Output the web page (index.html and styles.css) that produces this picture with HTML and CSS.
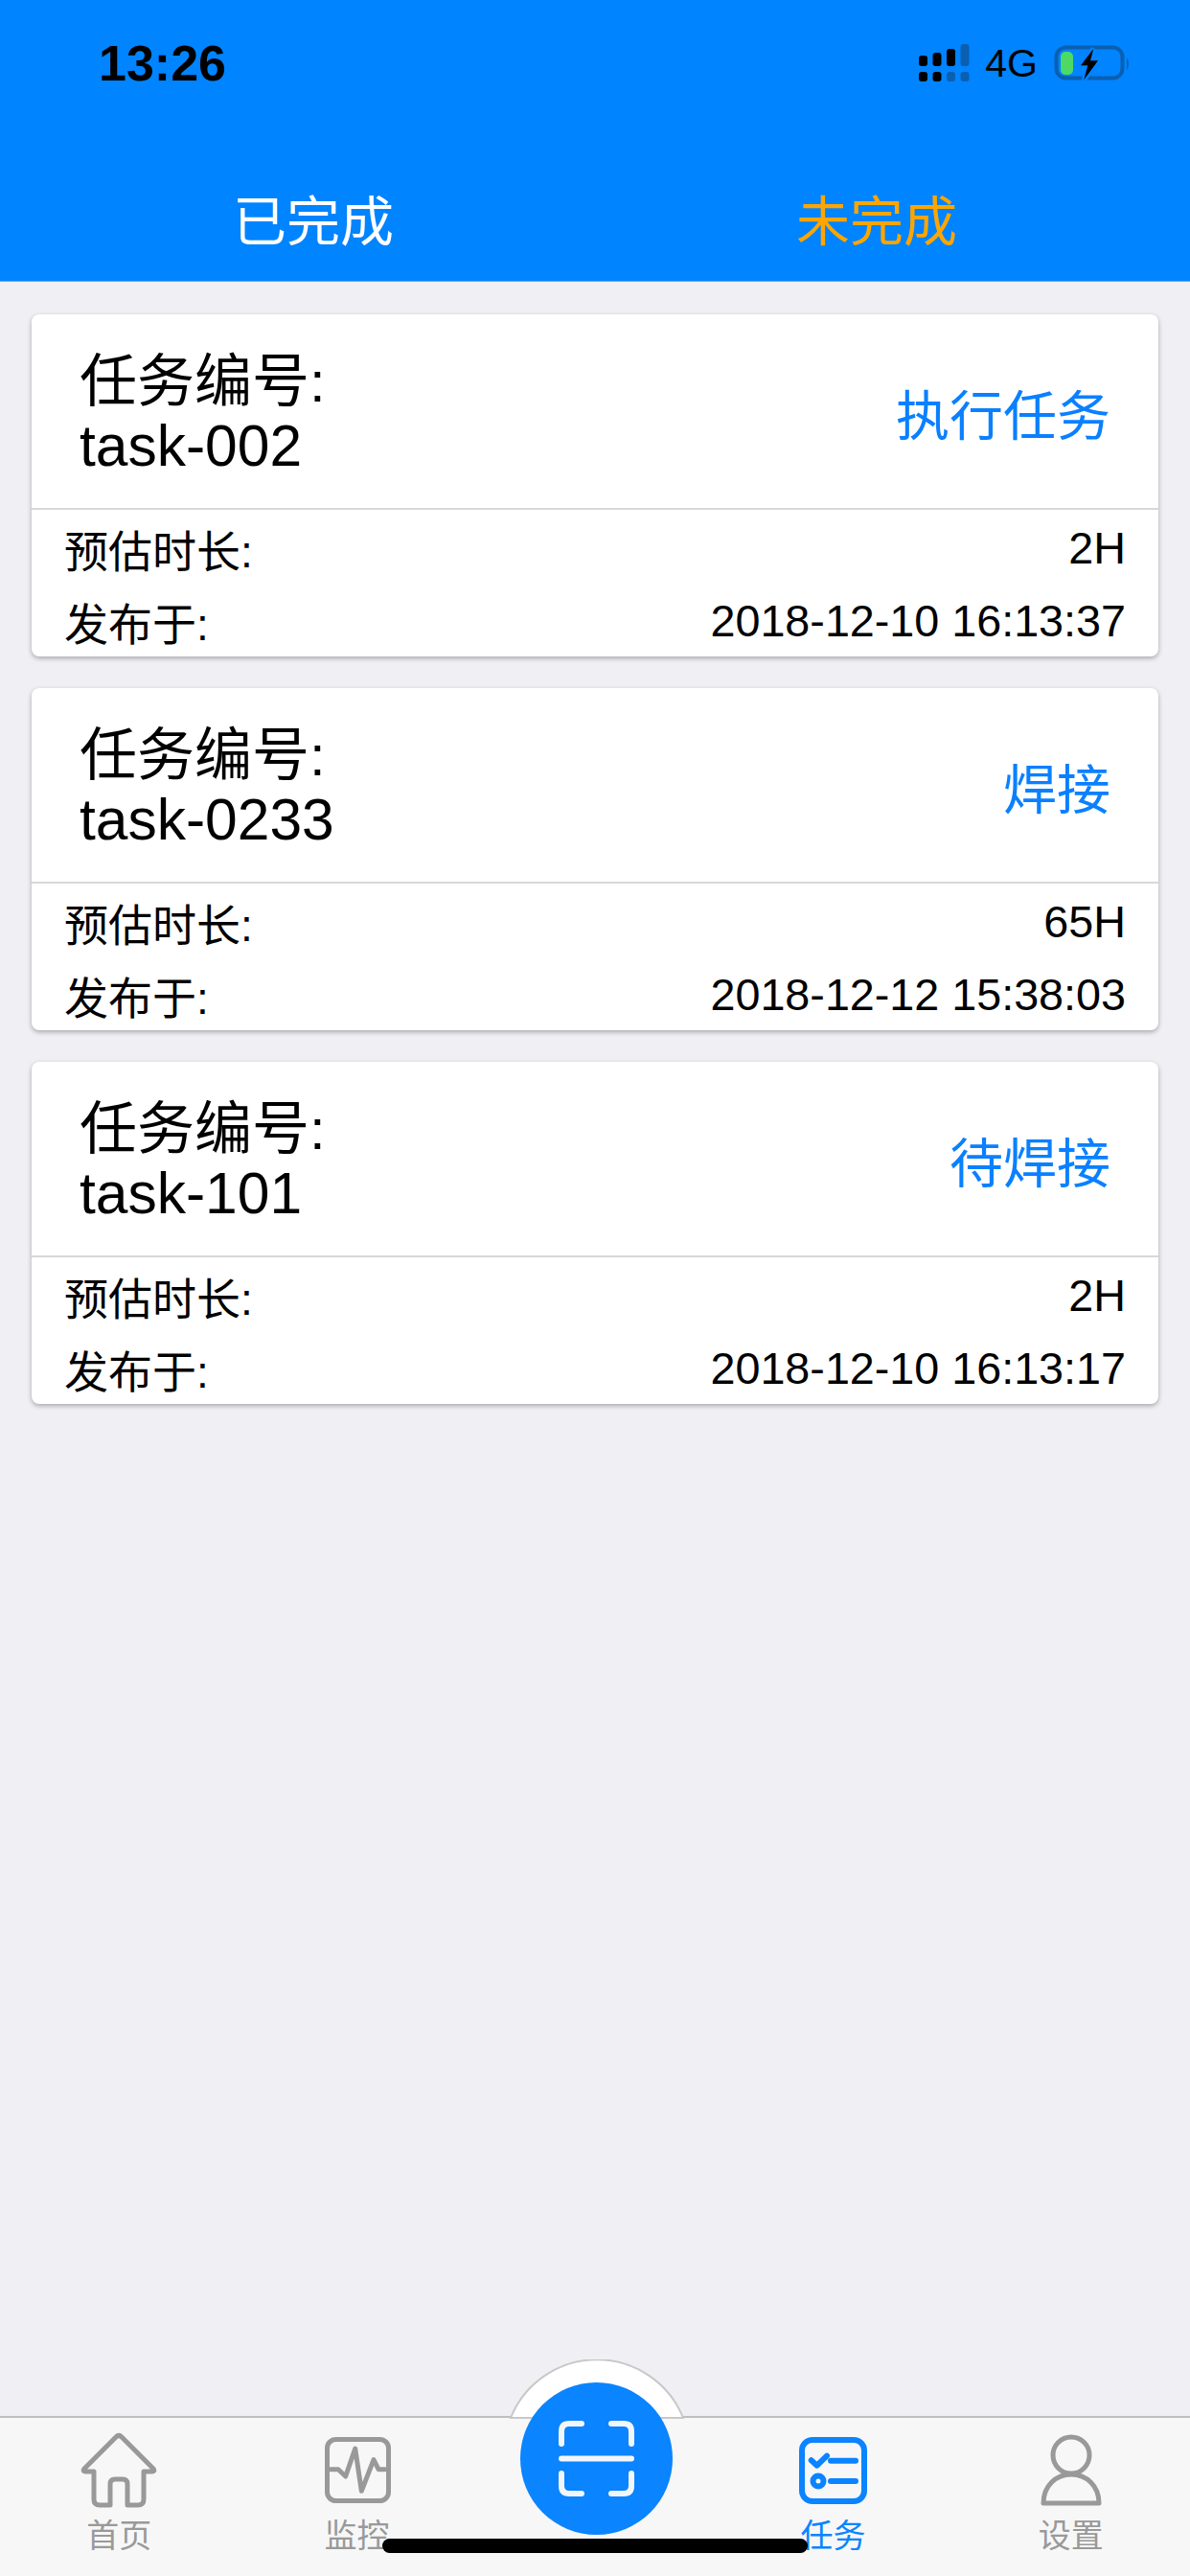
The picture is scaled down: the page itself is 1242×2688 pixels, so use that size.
FILE: index.html
```html
<!DOCTYPE html>
<html lang="zh">

<head>
    <meta charset="UTF-8">
    <meta name="viewport" content="width=device-width, initial-scale=1.0">
    <title>任务</title>
    <link rel="stylesheet" href="styles.css">
</head>

<body>
    <header class="top">
        <div class="status">
            <span class="time">13:26</span>
            <div class="status-right">
                <svg class="signal" width="56" height="42" viewBox="0 0 56 42">
                    <rect x="2" y="13" width="9" height="11" rx="3" />
                    <rect x="16.500" y="10" width="9" height="14" rx="3" />
                    <rect x="31" y="6" width="9" height="18" rx="3" />
                    <rect class="dim" x="45.500" y="1" width="9" height="23" rx="3" />
                    <rect x="2" y="30" width="9" height="10" rx="3" />
                    <rect x="16.500" y="30" width="9" height="10" rx="3" />
                    <rect class="dim" x="31" y="30" width="9" height="10" rx="3" />
                    <rect class="dim" x="45.500" y="30" width="9" height="10" rx="3" />
                </svg>
                <span class="net">4G</span>
                <svg class="battery" width="86" height="44" viewBox="0 0 86 44">
                    <rect class="battery-body" x="4.500" y="5.500" width="69" height="32" rx="10" />
                    <path class="battery-nub" d="M78 16 Q82 22 78 29 Z" />
                    <rect class="battery-level" x="9" y="10" width="13" height="24" rx="5" />
                    <path class="bolt-gap" d="M43.300 6.700 L30 24.300 H37.300 L33.300 39.300 L48 19.300 H40 Z" />
                    <path d="M43.300 6.700 L30 24.300 H37.300 L33.300 39.300 L48 19.300 H40 Z" />
                </svg>
            </div>
        </div>
        <nav class="tabs">
            <a class="tab">已完成</a>
            <a class="tab tab-on">未完成</a>
        </nav>
    </header>

    <main class="list">
        <section class="card">
            <div class="card-top">
                <div class="task-name">
                    <div>任务编号:</div>
                    <div class="task-id">task-002</div>
                </div>
                <a class="task-action">执行任务</a>
            </div>
            <div class="card-rows">
                <div class="row"><span>预估时长:</span><span class="row-value">2H</span></div>
                <div class="row"><span>发布于:</span><span class="row-value">2018-12-10 16:13:37</span></div>
            </div>
        </section>
        <section class="card">
            <div class="card-top">
                <div class="task-name">
                    <div>任务编号:</div>
                    <div class="task-id">task-0233</div>
                </div>
                <a class="task-action">焊接</a>
            </div>
            <div class="card-rows">
                <div class="row"><span>预估时长:</span><span class="row-value">65H</span></div>
                <div class="row"><span>发布于:</span><span class="row-value">2018-12-12 15:38:03</span></div>
            </div>
        </section>
        <section class="card">
            <div class="card-top">
                <div class="task-name">
                    <div>任务编号:</div>
                    <div class="task-id">task-101</div>
                </div>
                <a class="task-action">待焊接</a>
            </div>
            <div class="card-rows">
                <div class="row"><span>预估时长:</span><span class="row-value">2H</span></div>
                <div class="row"><span>发布于:</span><span class="row-value">2018-12-10 16:13:17</span></div>
            </div>
        </section>
    </main>

    <footer class="tabbar">
        <svg class="bump" width="184" height="62" viewBox="0 0 184 62">
            <path d="M2 61 A97 97 0 0 1 182 61 Z" />
        </svg>

        <a class="item">
            <svg class="icon" width="80" height="80" viewBox="0 0 80 80">
                <path d="M37 5 L4 38 Q2 41 5 41 H14 V70 Q14 76 20 76 H31 V54 Q31 49 36 49 H44 Q49 49 49 54 V76 H60 Q66 76 66 70 V41 H75 Q78 41 76 38 L43 5 Q40 2 37 5 Z" />
            </svg>
            <span>首页</span>
        </a>
        <a class="item">
            <svg class="icon" width="80" height="80" viewBox="0 0 80 80">
                <rect x="8.500" y="7.500" width="64" height="64" rx="9" />
                <path d="M12 38.700 H20 L27.700 46 L37.700 17 L44.300 61.300 L57 28.700 L62 38.700 H68.700" />
            </svg>
            <span>监控</span>
        </a>
        <div class="item"></div>
        <a class="item item-on">
            <svg class="icon" width="80" height="80" viewBox="0 0 80 80">
                <rect x="8" y="8" width="65" height="64" rx="11" />
                <path d="M17.700 29.300 L23.700 34.700 L34 24.700 M38 29.700 H64 M38 51 H64" />
                <circle cx="25" cy="51" r="5.500" />
            </svg>
            <span>任务</span>
        </a>
        <a class="item">
            <svg class="icon" width="80" height="80" viewBox="0 0 80 80">
                <circle cx="40" cy="24" r="19" />
                <path d="M11 74 C11 56 24 44 40 44 C56 44 69 56 69 74 Z" />
            </svg>
            <span>设置</span>
        </a>

        <button class="scan">
            <svg width="159" height="159" viewBox="0 0 159 159">
                <path d="M43 64 V51 Q43 43 51 43 H64 M95 43 H108 Q116 43 116 51 V64 M43 95 V108 Q43 116 51 116 H64 M95 116 H108 Q116 116 116 108 V95 M43 79.500 H116" />
            </svg>
        </button>
        <div class="home-bar"></div>
    </footer>
</body>

</html>
```

FILE: styles.css
```css
* {
    box-sizing: border-box;
}

html,
body {
    margin: 0;
    padding: 0;
}

body {
    width: 1242px;
    height: 2688px;
    overflow: hidden;
    display: flex;
    flex-direction: column;
    font-family: 'Liberation Sans', 'Noto Sans CJK SC', sans-serif;
    background-color: #efeff4;
    color: #000;
}

/* header */
.top {
    height: 294px;
    background-color: #0084ff;
    border-bottom: 1px solid #5aa8f5;
}

.status {
    height: 132px;
    display: flex;
    justify-content: space-between;
    align-items: center;
    padding: 0 58px 0 103px;
}

.time {
    font-size: 52px;
    font-weight: bold;
}

.status-right {
    display: flex;
    align-items: center;
    gap: 15px;
}

.net {
    font-size: 41px;
}

.signal .dim {
    fill: #0b5fb0;
}

.battery-body {
    fill: none;
    stroke: #0b5fb0;
    stroke-width: 4;
}

.battery-nub {
    fill: #0b5fb0;
}

.battery-level {
    fill: #4cd964;
}

.bolt-gap {
    fill: none;
    stroke: #0084ff;
    stroke-width: 5;
}

.tabs {
    display: grid;
    grid-template-columns: 1fr 1fr;
    height: 128px;
    margin-top: 30px;
    padding: 0 33px;
    align-items: center;
    text-align: center;
}

.tab {
    font-size: 56px;
    color: #fff;
}

.tab-on {
    color: #ffa500;
}

/* task cards */
.list {
    flex: 1;
    display: flex;
    flex-direction: column;
    gap: 33px;
    padding: 34px 33px 0 33px;
}

.card {
    height: 357px;
    background-color: #fff;
    border-radius: 8px;
    box-shadow: 0 2px 5px rgba(0, 0, 0, 0.3);
}

.card-top {
    height: 204px;
    display: flex;
    justify-content: space-between;
    align-items: center;
    padding: 6px 50px 0;
    border-bottom: 2px solid #d8d8d8;
}

.task-name {
    font-size: 60px;
    line-height: 66px;
}

.task-id {
    font-size: 60.5px;
}

.task-action {
    font-size: 56px;
    color: #0a80ff;
    margin-top: -6px;
}

.card-rows {
    padding: 2px 34px 0;
}

.row {
    display: flex;
    justify-content: space-between;
    height: 76px;
    align-items: center;
    font-size: 46px;
}

.row-value {
    font-size: 46.7px;
}

/* bottom bar */
.tabbar {
    position: relative;
    height: 167px;
    display: grid;
    grid-template-columns: repeat(5, 1fr);
    background-color: #f7f7f7;
    border-top: 2px solid #bfbfc2;
}

.bump {
    position: absolute;
    left: 531px;
    top: -61px;
}

.bump path {
    fill: #fff;
    stroke: #c8c8c8;
    stroke-width: 2;
}

.item {
    display: flex;
    flex-direction: column;
    align-items: center;
    padding-top: 15px;
    font-size: 34px;
    line-height: 48px;
    color: #999;
}

.item-on {
    color: #0a84ff;
}

.icon {
    fill: none;
    stroke: #999;
    stroke-width: 5;
    stroke-linecap: round;
    stroke-linejoin: round;
    margin-bottom: 4px;
}

.item-on .icon {
    stroke: #0a84ff;
    stroke-width: 6;
}

.scan {
    position: absolute;
    left: 543px;
    top: -37px;
    width: 159px;
    height: 159px;
    padding: 0;
    border: 0;
    border-radius: 50%;
    background-color: #0a84ff;
}

.scan svg {
    display: block;
    fill: none;
    stroke: #f2f6fb;
    stroke-width: 6;
    stroke-linecap: round;
}

.home-bar {
    position: absolute;
    left: 399px;
    top: 126px;
    width: 444px;
    height: 15px;
    border-radius: 8px;
    background-color: #000;
}
```
